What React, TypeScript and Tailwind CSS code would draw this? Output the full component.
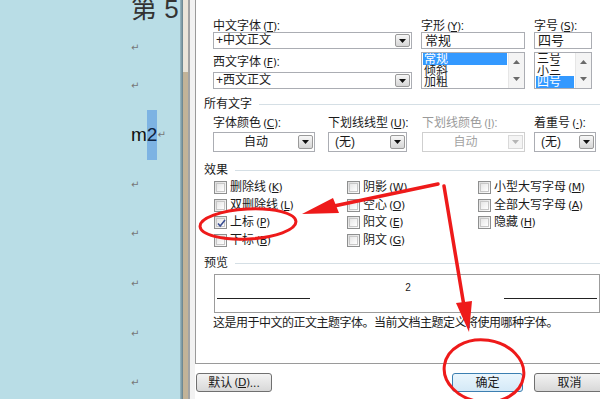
import React from "react";

// Mnemonic key like (T) with underlined letter
function Acc({ k }: { k: string }) {
  return (
    <span className="ml-[2px] text-[11px] font-['DejaVu_Sans',sans-serif] tracking-[-0.5px]">
      (<span className="underline underline-offset-1">{k}</span>)
    </span>
  );
}

function DropBtn({ disabled }: { disabled?: boolean }) {
  return (
    <div
      className={
        disabled
          ? "w-[15px] my-[1px] mr-[1px] flex items-center justify-center border border-[#d9d9d9] bg-[#f4f4f4]"
          : "w-[15px] my-[1px] mr-[1px] flex items-center justify-center rounded-[2px] border border-[#9a9a9a] bg-gradient-to-b from-[#f7f7f7] to-[#d6d6d6]"
      }
    >
      <svg width="7" height="4" viewBox="0 0 7 4">
        <path d="M0 0h7L3.5 4z" fill={disabled ? "#b5b5b5" : "#111"} />
      </svg>
    </div>
  );
}

function Combo({ value }: { value: string }) {
  return (
    <div className="flex h-[17px] border border-[#abadb3] bg-white">
      <div className="flex-1 pl-[2px] leading-[15px] whitespace-nowrap">{value}</div>
      <DropBtn />
    </div>
  );
}

function Select({
  value,
  disabled,
  center,
}: {
  value: string;
  disabled?: boolean;
  center?: boolean;
}) {
  return (
    <div
      className={
        disabled
          ? "flex h-[20px] border border-[#cfcfcf] bg-white text-[#a3a3a3]"
          : "flex h-[20px] border border-[#abadb3] bg-white"
      }
    >
      <div
        className={
          center
            ? "flex-1 text-center leading-[18px]"
            : "flex-1 pl-[6px] leading-[18px]"
        }
      >
        {value}
      </div>
      <div className="flex py-[1px]">
        <DropBtn disabled={disabled} />
      </div>
    </div>
  );
}

function ListBox({ items, selected }: { items: string[]; selected: number }) {
  return (
    <div className="mt-[3px] flex h-[37px] border border-[#abadb3] bg-white overflow-hidden">
      <div className="flex-1 flex flex-col pl-[1px]">
        {items.map((it, i) => (
          <div
            key={it}
            className={
              i === selected
                ? "h-[12px] leading-[12px] text-[12px] pl-[1px] overflow-hidden bg-[#3399ff] text-white mr-[1px]"
                : "h-[12px] leading-[12px] text-[12px] pl-[1px] overflow-hidden"
            }
          >
            {it}
          </div>
        ))}
      </div>
      <div className="w-[16px] bg-[#f4f4f4] border-l border-[#e6e6e6] flex flex-col items-center justify-between py-[7px]">
        <svg width="7" height="4" viewBox="0 0 7 4">
          <path d="M0 4h7L3.5 0z" fill="#6a6a6a" />
        </svg>
        <svg width="7" height="4" viewBox="0 0 7 4">
          <path d="M0 0h7L3.5 4z" fill="#6a6a6a" />
        </svg>
      </div>
    </div>
  );
}

function Group({ title, gap }: { title: string; gap: string }) {
  return (
    <div className={`${gap} flex items-center h-[12px] leading-[12px]`}>
      <span className="whitespace-nowrap">{title}</span>
      <div className="ml-[7px] flex-1 h-px bg-[#d5dfe5]" />
    </div>
  );
}

function Check({ checked }: { checked?: boolean }) {
  return (
    <span className="w-[13px] h-[13px] shrink-0 border border-[#8e8f8f] bg-gradient-to-br from-[#dcdcdc] to-[#fdfdfd] p-[1px] flex">
      <span className="relative flex-1 border border-[#c7c7c7] bg-gradient-to-br from-[#e6e6e6] to-white">
        {checked && (
          <svg className="absolute -left-[1px] -top-[1px]" width="11" height="11" viewBox="0 0 11 11">
            <path d="M2 5.5l2.2 2.6L9 2" fill="none" stroke="#3b4f93" strokeWidth="1.6" />
          </svg>
        )}
      </span>
    </span>
  );
}

function Effect({ label, k, checked }: { label: string; k: string; checked?: boolean }) {
  return (
    <div className="h-[17.5px] flex items-center">
      <Check checked={checked} />
      <span className="ml-[3px] whitespace-nowrap leading-[12px]">
        {label}
        <Acc k={k} />
      </span>
    </div>
  );
}

function Btn({ children, primary, w }: { children: React.ReactNode; primary?: boolean; w: string }) {
  return (
    <div
      className={
        primary
          ? `${w} h-[19px] rounded-[3px] border border-[#3c7fb1] bg-gradient-to-b from-[#eaf6fd] to-[#d4e9f7] flex items-center justify-center leading-[12px]`
          : `${w} h-[19px] rounded-[3px] border border-[#707070] bg-gradient-to-b from-[#f3f3f3] to-[#d8d8d8] flex items-center justify-center leading-[12px]`
      }
    >
      {children}
    </div>
  );
}

function Ret() {
  return <span className="text-[10px] leading-[10px] text-[#777] font-['DejaVu_Sans',sans-serif]">↵</span>;
}

export default function App() {
  return (
    <div className="relative w-[600px] h-[399px] overflow-hidden flex bg-white text-[12px] text-[#1a1a1a] font-['Liberation_Sans','Noto_Sans_CJK_SC',sans-serif]">
      {/* document page behind the dialog */}
      <div className="w-[180px] shrink-0 bg-[#b9dde6] flex flex-col pl-[131px]">
        <div className="h-[22px] flex items-end">
          <span className="text-[26px] leading-[26px] text-[#333] whitespace-nowrap">第 5</span>
        </div>
        <div className="h-[52px] flex items-center"><Ret /></div>
        <div className="h-[24px] flex items-center"><Ret /></div>
        <div className="h-[74px] flex items-center">
          <span className="text-[19px] leading-[20px] text-[#111]">m</span>
          <span className="h-[50px] flex items-center bg-[#7db3e3] text-[19px] leading-[20px] text-[#0d2240]">2</span>
          <Ret />
        </div>
        <div className="h-[26px] flex items-center"><Ret /></div>
        <div className="h-[72px] flex items-center"><Ret /></div>
        <div className="h-[28px] flex items-center"><Ret /></div>
        <div className="h-[72px] flex items-center"><Ret /></div>
        <div className="h-[26px] flex items-center"><Ret /></div>
      </div>
      <div className="w-[3px] shrink-0 bg-gradient-to-r from-[#9cbcc5] to-[#66808a]" />
      <div className="w-[5px] shrink-0 flex flex-col">
        <div className="h-[72px] bg-[#ebe5d9]" />
        <div className="flex-1 bg-[#c2b398]" />
      </div>
      <div className="w-[2px] shrink-0 bg-[#a3a3a3]" />
      <div className="w-[5px] shrink-0 bg-[#f2f2f2]" />

      {/* font dialog */}
      <div className="w-[410px] shrink-0 flex flex-col">
        <div className="h-[364px] border-l border-b border-[#9a9a9a] bg-white pl-[8px] flex flex-col">
          <div className="flex pl-[9px] pt-[20px] gap-[9px]">
            <div className="w-[199px] flex flex-col">
              <div className="h-[12px] leading-[12px] whitespace-nowrap">中文字体<Acc k="T" />:</div>
              <Combo value="+中文正文" />
              <div className="mt-[7px] h-[12px] leading-[12px] whitespace-nowrap">西文字体<Acc k="F" />:</div>
              <div className="mt-[4px]"><Combo value="+西文正文" /></div>
            </div>
            <div className="w-[104px] flex flex-col">
              <div className="h-[12px] leading-[12px] whitespace-nowrap">字形<Acc k="Y" />:</div>
              <div className="h-[17px] border border-[#abadb3] pl-[3px] leading-[15px] text-[13px]">常规</div>
              <ListBox items={["常规", "倾斜", "加粗"]} selected={0} />
            </div>
            <div className="w-[58px] flex flex-col">
              <div className="h-[12px] leading-[12px] whitespace-nowrap">字号<Acc k="S" />:</div>
              <div className="h-[17px] border border-[#abadb3] pl-[3px] leading-[15px] text-[13px]">四号</div>
              <ListBox items={["三号", "小三", "四号"]} selected={2} />
            </div>
          </div>

          <Group title="所有文字" gap="mt-[9px]" />
          <div className="flex pl-[9px] mt-[7px]">
            <div className="w-[102px] flex flex-col">
              <div className="h-[12px] leading-[12px] whitespace-nowrap">字体颜色<Acc k="C" />:</div>
              <div className="mt-[3px]"><Select value="自动" center /></div>
            </div>
            <div className="ml-[13px] w-[79px] flex flex-col">
              <div className="h-[12px] leading-[12px] whitespace-nowrap">下划线线型<Acc k="U" />:</div>
              <div className="mt-[3px]"><Select value="(无)" /></div>
            </div>
            <div className="ml-[15px] w-[103px] flex flex-col">
              <div className="h-[12px] leading-[12px] whitespace-nowrap text-[#9a9a9a]">下划线颜色<Acc k="I" />:</div>
              <div className="mt-[3px]"><Select value="自动" center disabled /></div>
            </div>
            <div className="ml-[9px] w-[62px] flex flex-col">
              <div className="h-[12px] leading-[12px] whitespace-nowrap">着重号<Acc k="·" />:</div>
              <div className="mt-[3px]"><Select value="(无)" /></div>
            </div>
          </div>

          <Group title="效果" gap="mt-[12px]" />
          <div className="mt-[3px] pl-[10px] grid grid-cols-[133px_131px_1fr]">
            <div className="flex flex-col">
              <Effect label="删除线" k="K" />
              <Effect label="双删除线" k="L" />
              <Effect label="上标" k="P" checked />
              <Effect label="下标" k="B" />
            </div>
            <div className="flex flex-col">
              <Effect label="阴影" k="W" />
              <Effect label="空心" k="O" />
              <Effect label="阳文" k="E" />
              <Effect label="阴文" k="G" />
            </div>
            <div className="flex flex-col">
              <Effect label="小型大写字母" k="M" />
              <Effect label="全部大写字母" k="A" />
              <Effect label="隐藏" k="H" />
            </div>
          </div>

          <Group title="预览" gap="mt-[8px]" />
          <div className="mt-[5px] ml-[10px] w-[386px] h-[39px] border border-[#9c9c9c] bg-white flex flex-col">
            <div className="h-[18px] flex items-end justify-center pl-[2px]">
              <span className="text-[10px] leading-[10px]">2</span>
            </div>
            <div className="mt-[5px] flex justify-between px-[2px]">
              <div className="w-[93px] h-px bg-[#222]" />
              <div className="w-[93px] h-px bg-[#222]" />
            </div>
          </div>
          <div className="mt-[4px] pl-[9px] h-[12px] leading-[12px] whitespace-nowrap tracking-[-0.5px]">
            这是用于中文的正文主题字体。当前文档主题定义将使用哪种字体。
          </div>
        </div>

        <div className="flex-1 flex items-start pt-[9px] pl-[1px]">
          <Btn w="w-[76px]">默认<Acc k="D" />...</Btn>
          <div className="flex-1" />
          <Btn w="w-[71px]" primary>确定</Btn>
          <div className="ml-[11px]">
            <Btn w="w-[71px]">取消</Btn>
          </div>
        </div>
      </div>

      {/* red hand-drawn annotations */}
      <svg className="absolute inset-0 pointer-events-none" width="600" height="399" viewBox="0 0 600 399">
        <g fill="none" stroke="#ee1a1a" strokeWidth="3">
          <ellipse cx="248" cy="224" rx="48" ry="15" transform="rotate(-3 248 224)" />
          <ellipse cx="484" cy="371" rx="40" ry="31" transform="rotate(8 484 371)" />
          <path d="M438 184L334 206" strokeWidth="3.5" strokeLinecap="round" />
          <path d="M444 186L464 306" strokeWidth="3.5" strokeLinecap="round" />
        </g>
        <g fill="#ee1a1a">
          <path d="M302 214L333 198L339 213z" />
          <path d="M469 332L456 303L472 301z" />
        </g>
      </svg>
    </div>
  );
}
